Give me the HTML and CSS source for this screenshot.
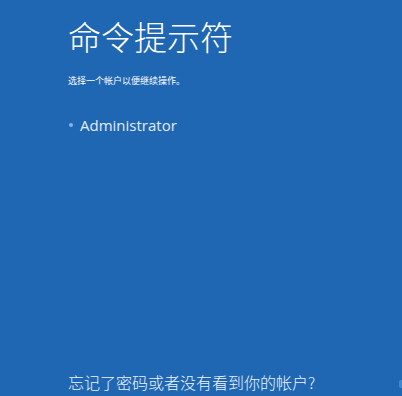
FILE: index.html
```html
<!DOCTYPE html>
<html lang="zh">
<head>
<meta charset="utf-8">
<link rel="stylesheet" href="styles.css">
</head>
<body>
<div class="screen">
  <div class="top">
    <h1 class="title">命令提示符</h1>
    <p class="subtitle">选择一个帐户以便继续操作。</p>
    <div class="account"><span class="dot"></span><span class="name">Administrator</span></div>
  </div>
  <div class="bottom">
    <span class="forgot">忘记了密码或者没有看到你的帐户?</span>
    <span class="edge"></span>
  </div>
</div>
</body>
</html>
```
FILE: styles.css
```css
html, body {
  margin: 0;
  padding: 0;
  width: 402px;
  height: 396px;
  overflow: hidden;
  background: #2067b3;
}
.screen {
  width: 402px;
  height: 396px;
  display: flex;
  flex-direction: column;
  justify-content: space-between;
  color: #fff;
  font-family: "Noto Sans CJK SC", "Open Sans", sans-serif;
}
.top {
  padding: 12px 0 0 68px;
  display: flex;
  flex-direction: column;
}
.title {
  margin: 0;
  font-weight: 300;
  font-size: 33px;
  line-height: 48px;
  letter-spacing: 0;
}
.subtitle {
  margin: 15px 0 0 0;
  font-size: 9px;
  line-height: 12px;
}
.account {
  margin-top: 27px;
  display: flex;
  align-items: center;
  gap: 7px;
  color: #e4ecf6;
}
.dot {
  width: 4px;
  height: 4px;
  border-radius: 50%;
  background: #7fb6e8;
  margin-left: 1px;
}
.name {
  font-family: "Open Sans", sans-serif;
  font-size: 15px;
  line-height: 22px;
}
.bottom {
  padding: 0 0 2px 68px;
  display: flex;
  align-items: flex-end;
  justify-content: space-between;
}
.forgot {
  font-size: 16px;
  line-height: 24px;
  font-weight: 300;
  color: #eef3fa;
}
.edge {
  width: 3px;
  height: 8px;
  margin-bottom: 6px;
  background: #3f86cf;
  border-radius: 2px 0 0 2px;
}
```
